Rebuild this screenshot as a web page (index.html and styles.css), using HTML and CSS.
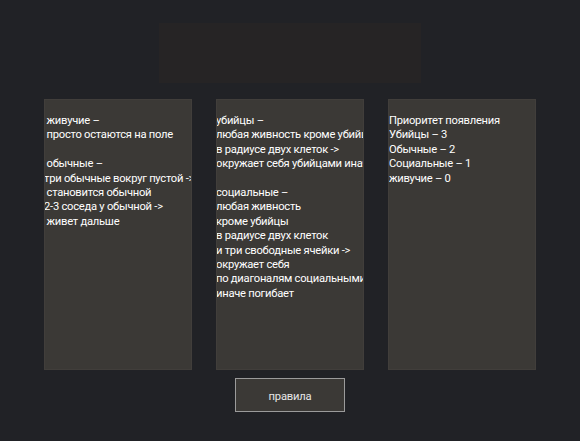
FILE: index.html
```html
<!DOCTYPE html>
<html>
<head>
<meta charset="utf-8">
<link rel="stylesheet" href="styles.css">
</head>
<body>
<div class="page">
  <div class="top-box"></div>
  <div class="panels">
    <div class="panel"><div class="text"> живучие –
 просто остаются на поле

 обычные –
три обычные вокруг пустой ->
 становится обычной
2-3 соседа у обычной ->
 живет дальше</div></div>
    <div class="panel"><div class="text">убийцы –
любая живность кроме убийцы
в радиусе двух клеток ->
окружает себя убийцами иначе погибает

социальные –
любая живность
кроме убийцы
в радиусе двух клеток
и три свободные ячейки ->
окружает себя
по диагоналям социальными
иначе погибает</div></div>
    <div class="panel"><div class="text text-3">Приоритет появления
Убийцы – 3
Обычные – 2
Социальные – 1
живучие – 0</div></div>
  </div>
  <button class="rules-btn">правила</button>
</div>
</body>
</html>
```
FILE: styles.css
```css
html, body {
  margin: 0;
  padding: 0;
  background: #212226;
  width: 580px;
  height: 441px;
  overflow: hidden;
}
.page {
  display: flex;
  flex-direction: column;
  align-items: center;
  font-family: "Roboto", "Noto Sans", sans-serif;
}
.top-box {
  margin-top: 23px;
  width: 262px;
  height: 60px;
  background: #262425;
}
.panels {
  margin-top: 16px;
  display: flex;
  gap: 24px;
}
.panel {
  width: 148px;
  height: 271px;
  box-sizing: border-box;
  background: #3b3936;
  border: 1px solid #413e3b;
  overflow: hidden;
}
.text {
  white-space: pre;
  color: #ffffff;
  font-size: 11.2px;
  letter-spacing: -0.25px;
  line-height: 14.4px;
  padding-top: 14px;
  margin-left: -1px;
}
.text-3 {
  margin-left: 0;
}
.rules-btn {
  margin-top: 8px;
  width: 110px;
  height: 34px;
  background: #3b3936;
  border: 1px solid #9b9b9b;
  color: #e6e6e6;
  font-family: "Roboto", "Noto Sans", sans-serif;
  font-size: 11.2px;
  letter-spacing: -0.2px;
  padding: 2px 0 0 0;
}
```
